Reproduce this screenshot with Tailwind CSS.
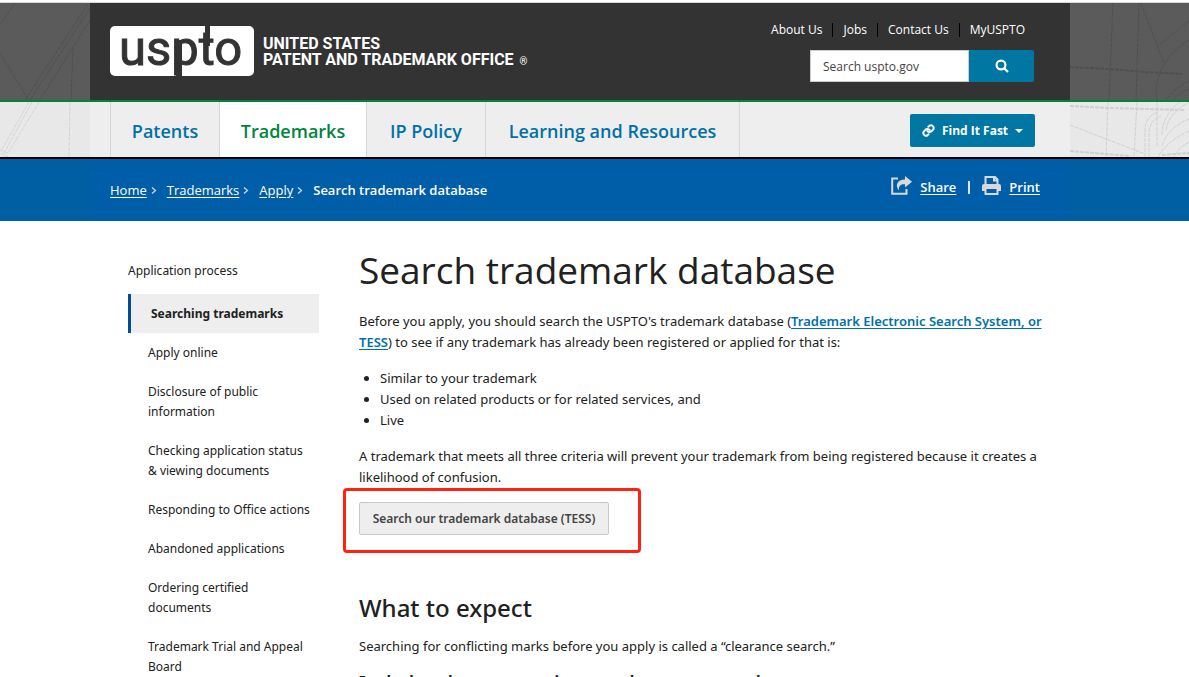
<!DOCTYPE html>
<html lang="en">
<head>
<meta charset="utf-8">
<meta name="viewport" content="width=device-width, initial-scale=1">
<title>Search trademark database | USPTO</title>
<script src="https://cdn.jsdelivr.net/npm/@tailwindcss/browser@4"></script>
</head>
<body class="h-screen overflow-hidden bg-white font-['Open_Sans','Noto_Sans',sans-serif] text-[13px] leading-[21px] text-[#212121]">

<header class="mt-[2px] border-t border-[#d8d8d8]">
  <div class="relative border-b-2 border-[#00843d] bg-[#5b5b5b]">
    <svg class="absolute left-0 top-0 h-[97px] w-[90px]" viewBox="0 0 90 97" fill="none" stroke="#505050" stroke-dasharray="4 1" aria-hidden="true">
      <path d="M15 0L0 22M0 50L28 96M88 1L25 97M90 5L30 97M90 17L40 97M73 45L71 97"/>
    </svg>
    <svg class="absolute right-0 top-0 h-[97px] w-[119px]" viewBox="0 0 119 97" fill="none" stroke="#505050" stroke-dasharray="4 1" aria-hidden="true">
      <path d="M43 0L39 97M69 0L66 97M71 0L94 60M89 42L119 18M119 37C100 48 82 72 87 97M119 78Q103 86 96 97M119 86Q108 91 103 97"/>
      <path stroke-width="2" d="M0 64L40 66L75 69L112 71"/>
    </svg>
    <div class="relative ml-[90px] mr-[119px] flex h-[97px] justify-between bg-[#333] pl-5 pr-9">
      <a href="#" class="mt-[23px] flex h-[50px] text-white" aria-label="United States Patent and Trademark Office">
        <svg class="h-[50px] w-[144px] overflow-visible" viewBox="0 0 144 50" aria-hidden="true">
          <rect width="144" height="50" rx="5" fill="#fff"/>
          <text x="9" y="39" font-family="Roboto, sans-serif" font-size="49" fill="#333" stroke="#333" stroke-width="1">uspto</text>
          <path fill="#333" d="M66 14h6v36h-6zM95 0h5v20h-5z"/>
        </svg>
        <span class="ml-[9px] mt-[10px] font-['Roboto',sans-serif] text-[16px] font-bold leading-4">UNITED STATES<br>PATENT AND TRADEMARK OFFICE <span class="ml-[2px] text-[10px] font-normal leading-none">®</span></span>
      </a>
      <div class="flex flex-col items-end">
        <ul class="mr-[9px] mt-5 flex items-center text-[12px] leading-[14px] text-white">
          <li class="border-r border-black pr-[10px]"><a href="#">About Us</a></li>
          <li class="border-r border-black px-[10px]"><a href="#">Jobs</a></li>
          <li class="border-r border-black px-[10px]"><a href="#">Contact Us</a></li>
          <li class="pl-[10px]"><a href="#">MyUSPTO</a></li>
        </ul>
        <form class="mt-[13px] flex h-8">
          <input type="text" aria-label="Search uspto.gov" placeholder="Search uspto.gov" class="w-[159px] border border-[#ccc] bg-white pl-3 text-[12px] placeholder:text-[#444]">
          <button type="button" aria-label="Search" class="flex w-[65px] items-center justify-center rounded-r-[2px] bg-[#0076a3]">
            <svg class="h-[14px] w-[14px]" viewBox="0 0 14 14" fill="none" stroke="#fff" stroke-width="2.2" aria-hidden="true"><circle cx="6" cy="6" r="4.4"/><path d="M9.2 9.2L13 13"/></svg>
          </button>
        </form>
      </div>
    </div>
  </div>

  <div class="relative border-b-2 border-black bg-[#e8e8e8]">
    <svg class="absolute left-0 top-0 h-[55px] w-[90px]" viewBox="0 0 90 55" fill="none" stroke="#d4d4d4" stroke-dasharray="4 1" aria-hidden="true">
      <path d="M29 0L1 49M32 0L4 51M39 0L8 51L0 48M70 0L69 55M1 51L8 55"/>
    </svg>
    <svg class="absolute right-0 top-0 h-[55px] w-[119px]" viewBox="0 0 119 55" fill="none" stroke="#d0d0d0" stroke-dasharray="4 1" aria-hidden="true">
      <path d="M38 0L36 55M67 0L64 55M0 23L75 52M87 0L87 45M75 55V27Q76 14 88 10M79 55V29Q81 17 91 14M92 33Q92 14 110 0M96 28Q98 12 119 0M119 17Q97 26 92 44M119 29Q98 38 88 55M119 40Q108 46 104 55"/>
      <path stroke-width="2" d="M0 4L40 6L114 8M0 49L60 54M92 53L119 51"/>
    </svg>
    <div class="relative ml-[90px] mr-[119px] flex h-[55px] items-center justify-between bg-[#eee] pl-5 pr-[35px]">
      <nav class="flex h-full text-[18px] font-semibold text-[#0071a6]" aria-label="Main">
        <a href="#" class="flex w-[110px] items-center justify-center border-x border-[#d6d6d6] pt-1">Patents</a>
        <a href="#" class="flex w-[146px] items-center justify-center bg-white pt-1 text-[#00843d]">Trademarks</a>
        <a href="#" class="flex w-[120px] items-center justify-center border-x border-[#d6d6d6] pt-1">IP Policy</a>
        <a href="#" class="flex w-[254px] items-center justify-center border-r border-[#d6d6d6] pt-1">Learning and Resources</a>
      </nav>
      <button type="button" class="mt-[2px] flex h-[33px] w-[125px] items-center justify-center gap-[7px] rounded-[2px] bg-[#0076a3] text-[12px] font-bold text-white">
        <svg class="h-[13px] w-[13px]" viewBox="0 0 24 24" fill="none" stroke="#fff" stroke-width="3.6" stroke-linecap="round" aria-hidden="true"><path d="M10 13a5 5 0 0 0 7.5.5l3-3a5 5 0 0 0-7-7l-1.8 1.7M14 11a5 5 0 0 0-7.500-.5l-3 3a5 5 0 0 0 7 7l1.700-1.700"/></svg>
        Find It Fast
        <svg class="h-1 w-2" viewBox="0 0 8 4" fill="#fff" aria-hidden="true"><path d="M0 0h8L4 4z"/></svg>
      </button>
    </div>
  </div>

  <div class="bg-[#005fa3]">
    <div class="ml-[90px] mr-[119px] flex h-[62px] items-center justify-between bg-[#005da8] pl-5 pr-[30px] text-white">
      <nav aria-label="Breadcrumb">
        <ol class="flex items-center">
          <li class="flex items-center"><a href="#" class="underline underline-offset-2">Home</a><svg class="ml-1 mr-[10px] h-[7px] w-[6px]" viewBox="0 0 6 7" fill="none" stroke="#c9dbea" stroke-width="1.300" aria-hidden="true"><path d="M1 .5l3.500 3L1 6.500"/></svg></li>
          <li class="flex items-center"><a href="#" class="underline underline-offset-2">Trademarks</a><svg class="ml-1 mr-[10px] h-[7px] w-[6px]" viewBox="0 0 6 7" fill="none" stroke="#c9dbea" stroke-width="1.300" aria-hidden="true"><path d="M1 .5l3.500 3L1 6.500"/></svg></li>
          <li class="flex items-center"><a href="#" class="underline underline-offset-2">Apply</a><svg class="ml-1 mr-[10px] h-[7px] w-[6px]" viewBox="0 0 6 7" fill="none" stroke="#c9dbea" stroke-width="1.300" aria-hidden="true"><path d="M1 .5l3.500 3L1 6.500"/></svg></li>
          <li class="font-semibold">Search trademark database</li>
        </ol>
      </nav>
      <div class="mb-[6px] flex items-center font-semibold">
        <a href="#" class="flex items-center gap-2 underline underline-offset-2">
          <svg class="mb-[3px] h-[19px] w-[21px]" viewBox="0 0 21 19" aria-hidden="true"><path d="M7 2.500H1.200v15.300H15.500V13" fill="none" stroke="#d9d9d9" stroke-width="2"/><path fill="#d9d9d9" d="M14 0l7 5.800-7 5.800V8.300C10 8 7.500 9.500 8 14.500 3.500 9 6.500 3.500 14 3.400z"/></svg>
          Share</a>
        <span class="mx-3 h-[13px] w-[2px] bg-[#d9e6f2]"></span>
        <a href="#" class="flex items-center gap-2 underline underline-offset-2">
          <svg class="mb-[3px] h-[19px] w-[19px]" viewBox="0 0 19 19" fill="none" stroke="#d9d9d9" stroke-width="2" aria-hidden="true"><path d="M3.500 9V1h9.500l2.500 2.500V9M12 1v3.500h3.500"/><path fill="#d9d9d9" stroke="none" d="M2 8h15a2 2 0 0 1 2 2v5h-3v-3H3v3H0v-5a2 2 0 0 1 2-2z"/><path d="M3.500 12h12v6h-12z"/></svg>
          Print</a>
      </div>
    </div>
  </div>
</header>

<div class="ml-[90px] mr-[119px] flex pl-[38px] pr-5 font-['Noto_Sans','Open_Sans',sans-serif]">
  <nav class="mt-10 w-[191px] shrink-0 text-[12px] leading-5" aria-label="Application process">
    <a href="#" class="block">Application process</a>
    <ul class="mt-[13px]">
      <li class="border-l-[3px] border-[#004c97] bg-[#eee] pb-[9px] pl-5 pt-[10px] font-bold"><a href="#">Searching trademarks</a></li>
      <li class="pb-[9px] pl-5 pt-[10px]"><a href="#">Apply online</a></li>
      <li class="pb-[9px] pl-5 pt-[10px]"><a href="#">Disclosure of public<br>information</a></li>
      <li class="pb-[9px] pl-5 pt-[10px]"><a href="#">Checking application status<br>&amp; viewing documents</a></li>
      <li class="pb-[9px] pl-5 pt-[10px]"><a href="#">Responding to Office actions</a></li>
      <li class="pb-[9px] pl-5 pt-[10px]"><a href="#">Abandoned applications</a></li>
      <li class="pb-[9px] pl-5 pt-[10px]"><a href="#">Ordering certified<br>documents</a></li>
      <li class="pb-[9px] pl-5 pt-[10px]"><a href="#">Trademark Trial and Appeal<br>Board</a></li>
    </ul>
  </nav>

  <main class="ml-10 min-w-0 flex-1">
    <h1 class="mt-6 whitespace-nowrap font-['Open_Sans',sans-serif] text-[37px] leading-[50px]">Search trademark database</h1>
    <p class="mt-4 whitespace-nowrap">Before you apply, you should search the USPTO's trademark database (<a href="#" class="font-semibold text-[#0071a6] underline underline-offset-2">Trademark Electronic Search System, or<br>TESS</a>) to see if any trademark has already been registered or applied for that is:</p>
    <ul class="my-[15px] list-disc pl-[21px]">
      <li>Similar to your trademark</li>
      <li>Used on related products or for related services, and</li>
      <li>Live</li>
    </ul>
    <p class="whitespace-nowrap">A trademark that meets all three criteria will prevent your trademark from being registered because it creates a<br>likelihood of confusion.</p>
    <div class="relative mt-[14px]">
      <div class="pointer-events-none absolute -left-4 -top-[14px] h-[65px] w-[298px] rounded-[4px] border-3 border-[#ff2213]"></div>
      <button type="button" class="h-[33px] w-[250px] rounded-[2px] border border-[#c9c9c9] bg-[#eee] text-[12px] font-semibold text-[#444]">Search our trademark database (TESS)</button>
    </div>
    <h2 class="mt-[57px] text-[24px] font-medium leading-8">What to expect</h2>
    <p class="mt-3">Searching for conflicting marks before you apply is called a “clearance search.”</p>
    <h3 class="mt-[11px] whitespace-nowrap text-[18px] font-semibold leading-7">Include other sources in your clearance search</h3>
  </main>
</div>
</body>
</html>
